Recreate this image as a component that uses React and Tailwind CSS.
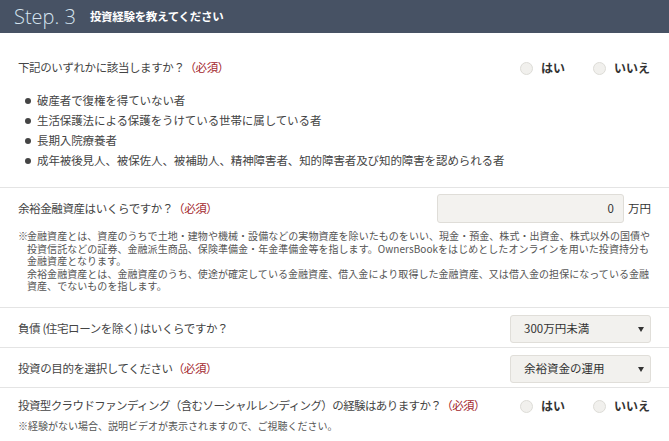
import React from "react";

const JP = { fontFamily: '"Noto Sans CJK JP", "Noto Sans", sans-serif' };

function Req() {
  return <span className="text-[#a3262c]">（必須）</span>;
}

function Radio({ label }) {
  return (
    <label className="flex items-center gap-[8px]">
      <span className="w-[13px] h-[13px] rounded-full bg-[#f1f0ed] border border-[#dddcd7]" />
      <span className="text-[12px] font-bold text-[#333]">{label}</span>
    </label>
  );
}

function Radios() {
  return (
    <div className="flex items-center gap-[28px] pr-[1px]">
      <Radio label="はい" />
      <Radio label="いいえ" />
    </div>
  );
}

function Select({ value }) {
  return (
    <div className="w-[141px] h-[28px] rounded-[3px] bg-[#f2f1ee] border border-[#e0ded9] flex items-center justify-between pl-[13px] pr-[6px]">
      <span className="text-[11.5px] text-[#333]">{value}</span>
      <svg width="6" height="5" viewBox="0 0 6 5" className="block">
        <path d="M0 0 H6 L3 5 Z" fill="#333" />
      </svg>
    </div>
  );
}

export default function App() {
  const bullets = [
    "破産者で復権を得ていない者",
    "生活保護法による保護をうけている世帯に属している者",
    "長期入院療養者",
    "成年被後見人、被保佐人、被補助人、精神障害者、知的障害者及び知的障害を認められる者",
  ];
  return (
    <div className="w-[669px] h-[441px] bg-white overflow-hidden text-[#444]" style={JP}>
      <div className="h-[33px] bg-[#475264] flex items-center pl-[14px]">
        <span
          className="text-[20px] font-light text-[#d6e4f0] leading-none"
          style={{ fontFamily: '"Open Sans", "Liberation Sans", sans-serif' }}
        >
          Step. 3
        </span>
        <span className="ml-[14px] text-[11.5px] font-bold text-white tracking-[-0.3px]">投資経験を教えてください</span>
      </div>

      <div className="px-[18px] pt-[25px] pb-[16px] border-b border-[#e4e4e4]">
        <div className="h-[20px] flex items-center justify-between">
          <span className="text-[11.5px] tracking-[-0.4px]">
            下記のいずれかに該当しますか？<Req />
          </span>
          <Radios />
        </div>
        <ul className="mt-[13px]">
          {bullets.map((b) => (
            <li key={b} className="h-[20px] flex items-center pl-[7px]">
              <span className="w-[6px] h-[6px] rounded-full bg-[#444] mr-[6px]" />
              <span className="text-[11.5px] tracking-[-0.1px]">{b}</span>
            </li>
          ))}
        </ul>
      </div>

      <div className="px-[18px] pt-[6px] pb-[14.5px] border-b border-[#e4e4e4]">
        <div className="h-[29px] flex items-center justify-between">
          <span className="text-[11.5px] tracking-[-0.4px]">
            余裕金融資産はいくらですか？<Req />
          </span>
          <div className="flex items-center">
            <div className="w-[187px] h-[29px] rounded-[3px] bg-[#f3f2ef] border border-[#dfddd8] flex items-center justify-end pr-[9px]">
              <span className="text-[11.5px] text-[#333]">0</span>
            </div>
            <span className="ml-[4px] text-[11.5px] text-[#333]">万円</span>
          </div>
        </div>
        <div className="mt-[7px] text-[10px] leading-[12.5px] text-[#555] tracking-[0.05px] whitespace-nowrap pl-[9px]">
          <div className="-ml-[9px] flex">
            <span className="w-[9px] shrink-0">※</span>
            <span>金融資産とは、資産のうちで土地・建物や機械・設備などの実物資産を除いたものをいい、現金・預金、株式・出資金、株式以外の国債や</span>
          </div>
          <div>投資信託などの証券、金融派生商品、保険準備金・年金準備金等を指します。OwnersBookをはじめとしたオンラインを用いた投資持分も</div>
          <div>金融資産となります。</div>
          <div>余裕金融資産とは、金融資産のうち、使途が確定している金融資産、借入金により取得した金融資産、又は借入金の担保になっている金融</div>
          <div>資産、でないものを指します。</div>
        </div>
      </div>

      <div className="px-[18px] pt-[7px] pb-[4px] border-b border-[#e4e4e4] flex items-center justify-between">
        <span className="text-[11.5px] tracking-[-0.4px]">負債 (住宅ローンを除く) はいくらですか？</span>
        <Select value="300万円未満" />
      </div>

      <div className="px-[18px] pt-[7px] pb-[4px] border-b border-[#e4e4e4] flex items-center justify-between">
        <span className="text-[11.5px] tracking-[-0.4px]">
          投資の目的を選択してください<Req />
        </span>
        <Select value="余裕資金の運用" />
      </div>

      <div className="px-[18px] pt-[8px]">
        <div className="h-[20px] flex items-center justify-between">
          <span className="text-[11.5px] tracking-[-0.6px]">
            投資型クラウドファンディング（含むソーシャルレンディング）の経験はありますか？<Req />
          </span>
          <Radios />
        </div>
        <div className="mt-[3px] text-[10px] leading-[13px] text-[#555]">
          ※経験がない場合、説明ビデオが表示されますので、ご視聴ください。
        </div>
      </div>
    </div>
  );
}
